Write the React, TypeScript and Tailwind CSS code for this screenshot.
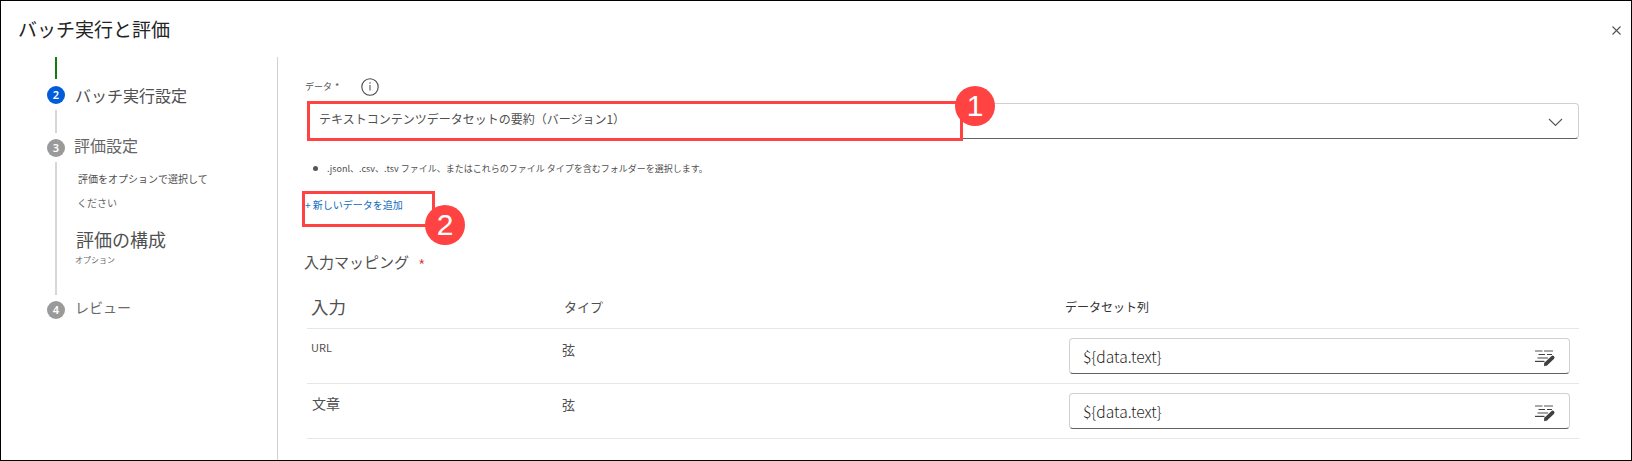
import type { ReactNode } from "react";

function StepDot({ n, active = false }: { n: number; active?: boolean }) {
  return (
    <div
      className={`flex h-[18px] w-[18px] shrink-0 items-center justify-center rounded-full font-['Noto_Sans','Noto_Sans_CJK_JP',sans-serif] text-[11px] font-semibold leading-[18px] text-white ${
        active ? "bg-[#015cda]" : "bg-[#9a9a9a]"
      }`}
    >
      {n}
    </div>
  );
}

function Badge({ children, className }: { children: ReactNode; className: string }) {
  return (
    <div
      className={`absolute z-10 flex h-10 w-10 items-center justify-center rounded-full bg-[#ff4343] font-['Liberation_Sans',sans-serif] text-[30px] leading-10 text-white ${className}`}
    >
      {children}
    </div>
  );
}

function EditIcon() {
  return (
    <svg width="22" height="18" viewBox="0 0 22 18" fill="none" className="mt-[4px]">
      <path d="M1 2h7.5M10 2h9" stroke="#555" strokeWidth="1.1" />
      <path d="M4.5 5.5h6.5M13 5.5h5" stroke="#404040" strokeWidth="1.2" />
      <path d="M3.5 9h10.5" stroke="#999" strokeWidth="1.8" />
      <path d="M1 12.4h9.5" stroke="#404040" strokeWidth="1.2" />
      <path d="M12.2 14.6l6.4-6" stroke="#404040" strokeWidth="3.8" strokeLinecap="round" />
      <path d="M10 17.2l.6-4 3.2 2.8z" fill="#404040" />
    </svg>
  );
}

function Sidebar() {
  return (
    <nav className="flex h-full w-[277px] shrink-0 border-r border-[#d1d1d1] pl-[46px]">
      <div className="flex w-[18px] flex-col items-center">
        <div className="h-[22px] w-[2px] bg-[#107c10]" />
        <div className="mt-[7px]"><StepDot n={2} active /></div>
        <div className="mt-[6px] h-[23px] w-[2px] bg-[#d6d6d6]" />
        <div className="mt-[6px]"><StepDot n={3} /></div>
        <div className="mt-[5px] h-[133px] w-[2px] bg-[#d6d6d6]" />
        <div className="mt-[6px]"><StepDot n={4} /></div>
      </div>
      <div className="flex flex-col whitespace-nowrap pl-[9px] pt-[26px] text-[#505050]">
        <div className="pl-px text-[16px] leading-6">バッチ実行設定</div>
        <div className="mt-[26px] text-[16px] leading-6 text-[#666]">評価設定</div>
        <div className="mt-[10px] pl-[4px] text-[10px] leading-[23px]">
          <div>評価をオプションで選択して</div>
          <div className="-ml-px mt-px text-[#666]">ください</div>
        </div>
        <div className="mt-[13px] pl-[2px] text-[18px] leading-6">評価の構成</div>
        <div className="mt-[3px] pl-px text-[8px] leading-3 text-[#666]">オプション</div>
        <div className="mt-[29px] pl-px text-[14px] leading-6 text-[#6a6a6a]">レビュー</div>
      </div>
    </nav>
  );
}

function ColumnInput() {
  return (
    <div className="flex h-9 w-[501px] items-center justify-between rounded-[4px] border border-[#d1d1d1] border-b-[#616161] pl-[13px] pr-[13px]">
      <span className="-mt-px text-[15.6px] font-light leading-6 text-[#1f1f1f]">{"${data.text}"}</span>
      <EditIcon />
    </div>
  );
}

function Row({ name, nameClass }: { name: string; nameClass: string }) {
  return (
    <div className="flex h-[55px] items-start border-b border-[#e6e6e6] pl-[4px] text-[#505050]">
      <div className={`w-[251px] ${nameClass}`}>{name}</div>
      <div className="mt-[11px] w-[507px] text-[13px] leading-5">弦</div>
      <div className="pt-[9px]"><ColumnInput /></div>
    </div>
  );
}

export default function App() {
  return (
    <div className="flex h-[461px] w-[1632px] flex-col overflow-hidden border border-black bg-white font-['Noto_Sans_CJK_JP',sans-serif]">
      <header className="flex h-[56px] shrink-0 items-center justify-between pl-[17px] pr-[10px]">
        <h1 className="-mt-px text-[19px] leading-7 text-[#242424]">バッチ実行と評価</h1>
        <svg width="9" height="9" viewBox="0 0 9 9" className="mt-[3px]" fill="none">
          <path d="M.5.5l8 8M8.5.5l-8 8" stroke="#555" strokeWidth="1.1" />
        </svg>
      </header>
      <div className="flex min-h-0 flex-1">
        <Sidebar />
        <main className="flex w-[1301px] flex-col pl-[27px] pt-[20px] text-[#505050]">
          <div className="flex h-5 items-center">
            <span className="text-[9px] leading-4">データ</span>
            <span className="ml-[3px] text-[9px] leading-4">*</span>
            <svg width="18" height="18" viewBox="0 0 18 18" className="-mt-px ml-[22px]" fill="none">
              <circle cx="9" cy="9" r="8.2" stroke="#444" strokeWidth="1.1" />
              <path d="M9 7v5.5" stroke="#555" strokeWidth="1.1" />
              <circle cx="9" cy="5" r=".8" fill="#555" />
            </svg>
          </div>
          <div className="relative ml-[2px] mt-[6px] flex h-9 items-center justify-between rounded-[4px] border border-[#d1d1d1] border-b-[#616161] pl-[11px] pr-[15px]">
            <span className="-mt-[5px] text-[12px] leading-5">テキストコンテンツデータセットの要約（バージョン1）</span>
            <svg width="15" height="9" viewBox="0 0 15 9" className="mt-[3px]" fill="none">
              <path d="M1 1l6.5 6.5L14 1" stroke="#555" strokeWidth="1.1" />
            </svg>
            <div className="absolute -left-px -top-[3px] h-10 w-[656px] border-[3px] border-[#ff4343]" />
            <Badge className="-top-[18px] left-[647px]">1</Badge>
          </div>
          <div className="mt-[20px] flex h-5 items-center pl-[8px]">
            <div className="-mt-px mr-[9px] h-[5px] w-[5px] rounded-full bg-[#555]" />
            <span className="text-[9px] leading-4">.jsonl、.csv、.tsv ファイル、またはこれらのファイル タイプを含むフォルダーを選択します。</span>
          </div>
          <div className="relative mt-[16px] flex h-5 items-center">
            <span className="text-[10px] leading-4 text-[#0f6cbd]">+ 新しいデータを追加</span>
            <div className="absolute -left-[3px] -top-[4px] h-9 w-[133px] border-[3px] border-[#ff4343]" />
            <Badge className="left-[120px] top-[10px]">2</Badge>
          </div>
          <div className="-ml-px mt-[35px] flex h-6 items-center">
            <h2 className="text-[15px] leading-6">入力マッピング</h2>
            <span className="ml-[9px] mt-[5px] text-[17px] font-light leading-6 text-[#d92c2c]">*</span>
          </div>
          <div className="ml-[2px] mt-[13px]">
            <div className="flex h-[42px] items-center border-b border-[#e6e6e6] pb-px pl-[4px]">
              <div className="w-[253px] text-[17.5px] leading-6">入力</div>
              <div className="w-[501px] text-[13px] leading-6">タイプ</div>
              <div className="text-[12px] leading-6 text-[#333]">データセット列</div>
            </div>
            <Row name="URL" nameClass="mt-[8px] text-[11px] leading-5" />
            <Row name="文章" nameClass="mt-[9px] pl-px text-[14px] leading-5" />
          </div>
        </main>
      </div>
    </div>
  );
}
